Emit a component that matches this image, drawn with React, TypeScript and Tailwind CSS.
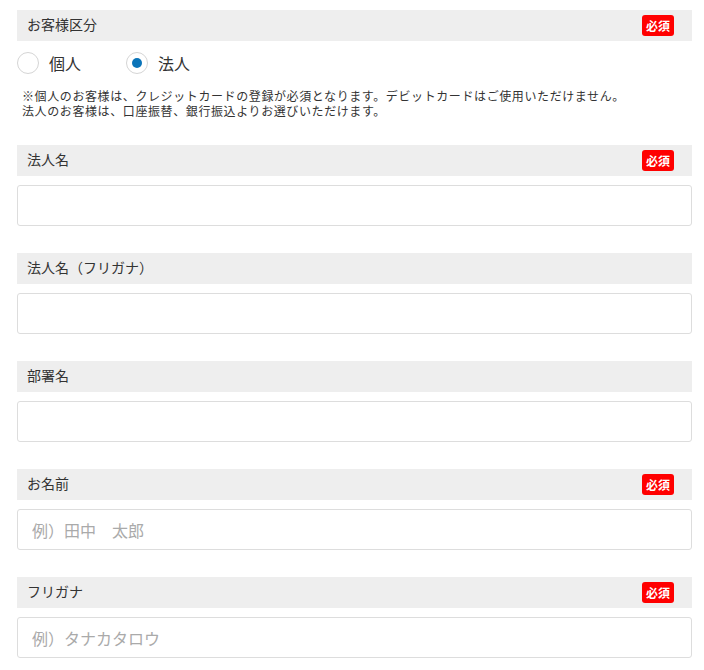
import { useState } from 'react';

const font = { fontFamily: '"Noto Sans CJK JP", "Noto Sans", sans-serif' };

function Badge() {
  return (
    <span className="flex h-[21px] w-[32px] items-center justify-center rounded-[3px] bg-[#ff0000] text-[12px] font-bold leading-none text-white">
      必須
    </span>
  );
}

function SectionHeader({ label, required }: { label: string; required?: boolean }) {
  return (
    <div className="flex h-[31px] items-center justify-between bg-[#eeeeee] pl-[10px] pr-[18px]">
      <span className="-mt-[2px] text-[14px] text-[#333333]">{label}</span>
      {required && <Badge />}
    </div>
  );
}

function Field({ label, required, placeholder }: { label: string; required?: boolean; placeholder?: string }) {
  return (
    <div className="mb-[27px]">
      <SectionHeader label={label} required={required} />
      <input
        type="text"
        placeholder={placeholder}
        className="mt-[9px] block h-[41px] w-full rounded-[3px] border border-[#dddddd] bg-white px-[14px] text-[16px] text-[#333333] outline-none placeholder:text-[#aaaaaa]"
        style={font}
      />
    </div>
  );
}

function Radio({ label, checked, onClick }: { label: string; checked: boolean; onClick: () => void }) {
  return (
    <label className="flex cursor-pointer items-center gap-[10px]" onClick={onClick}>
      <span className="flex h-[22px] w-[22px] items-center justify-center rounded-full border border-[#d5d5d5] bg-white">
        {checked && <span className="h-[10px] w-[10px] rounded-full bg-[#0a74b9]" />}
      </span>
      <span className="text-[16px] text-[#333333]">{label}</span>
    </label>
  );
}

export default function App() {
  const [kind, setKind] = useState<'personal' | 'corporate'>('corporate');

  return (
    <div className="min-h-[670px] bg-white pl-[17px] pr-[12px] pt-[10px]" style={font}>
      <div className="mb-[27px]">
        <SectionHeader label="お客様区分" required />
        <div className="mt-[11px] flex h-[22px] items-center gap-[45px]">
          <Radio label="個人" checked={kind === 'personal'} onClick={() => setKind('personal')} />
          <Radio label="法人" checked={kind === 'corporate'} onClick={() => setKind('corporate')} />
        </div>
        <div className="mt-[14px] pl-[5px] text-[12px] leading-[15px] tracking-[0.6px] text-[#333333]">
          <p>※個人のお客様は、クレジットカードの登録が必須となります。デビットカードはご使用いただけません。</p>
          <p>法人のお客様は、口座振替、銀行振込よりお選びいただけます。</p>
        </div>
      </div>

      <Field label="法人名" required />
      <Field label="法人名（フリガナ）" />
      <Field label="部署名" />
      <Field label="お名前" required placeholder="例）田中　太郎" />
      <Field label="フリガナ" required placeholder="例）タナカタロウ" />
    </div>
  );
}
